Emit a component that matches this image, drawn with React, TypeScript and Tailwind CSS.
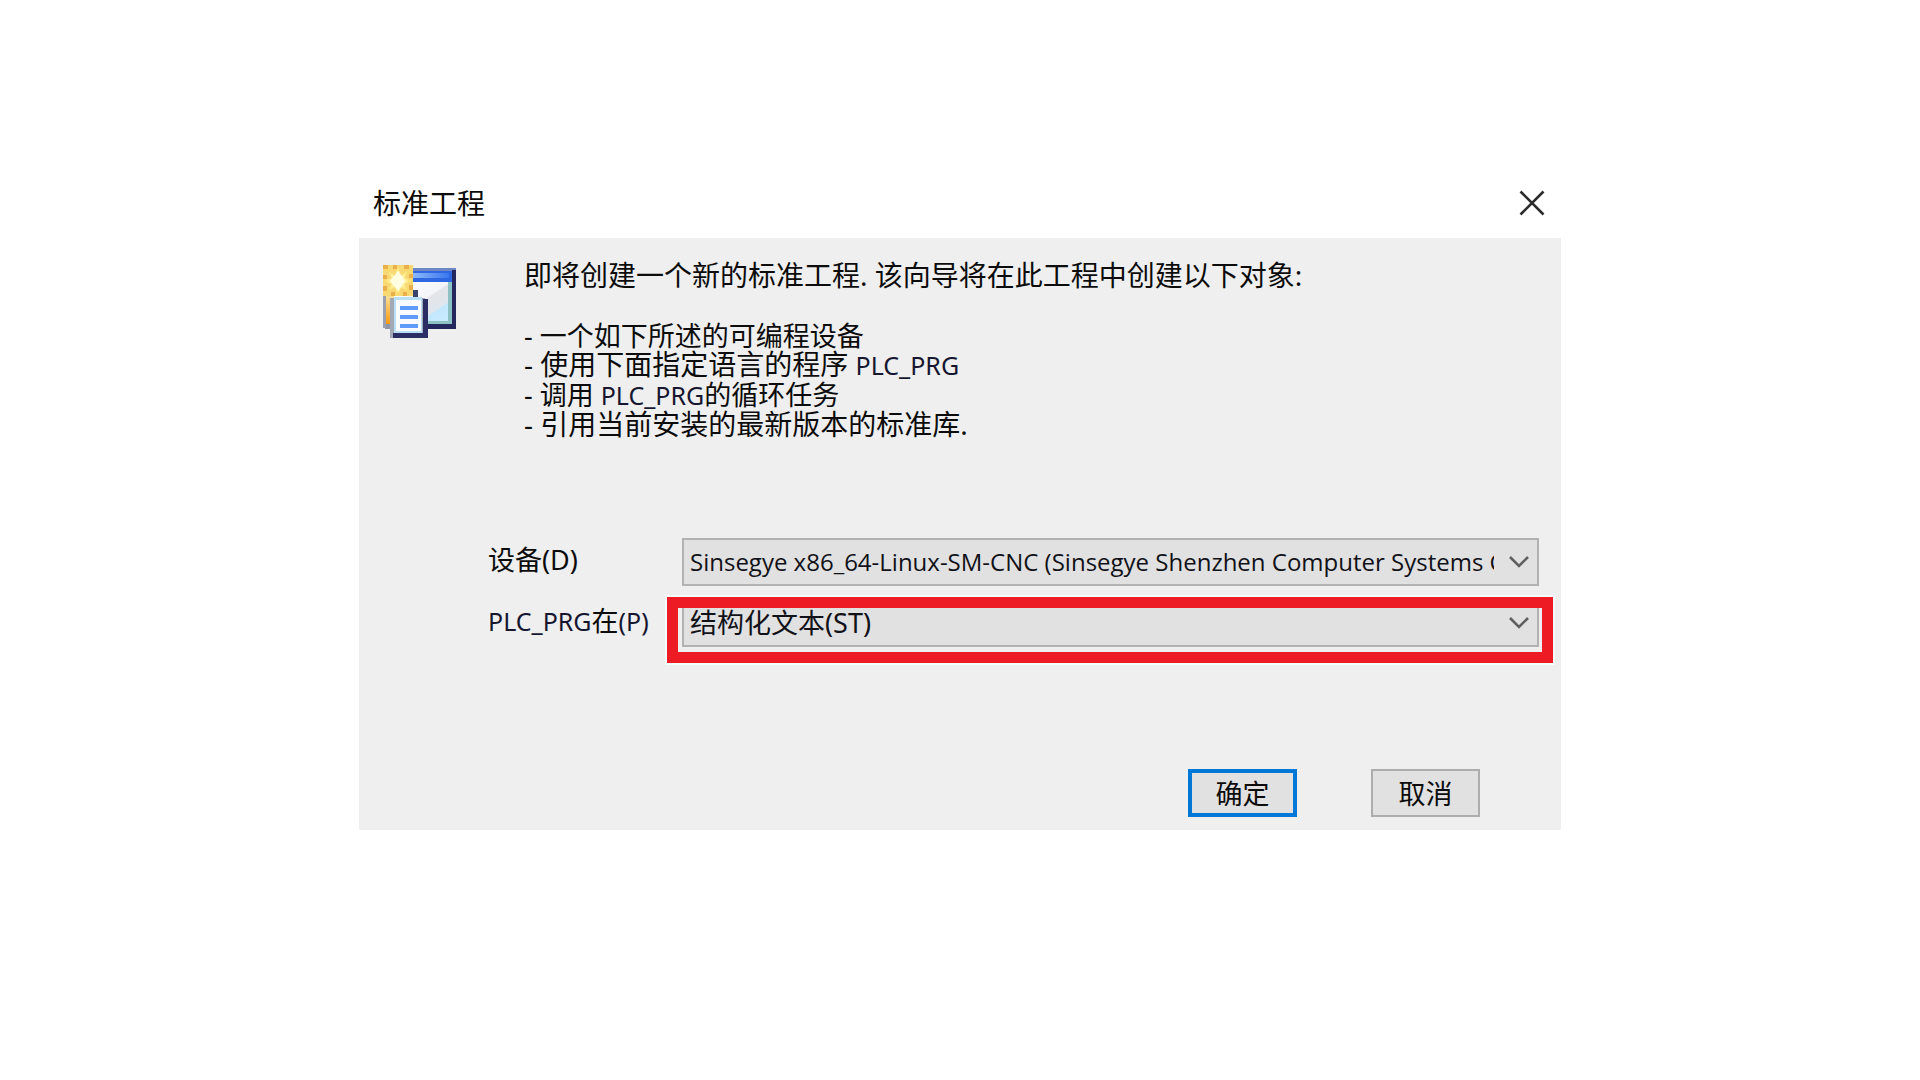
import type { ReactNode } from "react";

function Latin({ children }: { children: ReactNode }) {
  return <span className="text-[25px] text-[#161630]">{children}</span>;
}

function WizardIcon() {
  return (
    <svg viewBox="0 0 73 73" className="size-[73px] shrink-0" aria-hidden="true">
      <defs>
        <linearGradient id="bar" x1="0" x2="1" y1="0" y2="0">
          <stop offset="0" stopColor="#8db8fb" />
          <stop offset="1" stopColor="#3c78ee" />
        </linearGradient>
        <linearGradient id="pane" x1="0" x2="1" y1="0" y2="1">
          <stop offset="0" stopColor="#ffffff" />
          <stop offset="0.5" stopColor="#f3f5f8" />
          <stop offset="0.52" stopColor="#e3e5e8" />
          <stop offset="0.72" stopColor="#dfe6ee" />
          <stop offset="0.74" stopColor="#c3e7fd" />
          <stop offset="1" stopColor="#c9ecff" />
        </linearGradient>
        <linearGradient id="side" x1="0" x2="0" y1="0" y2="1">
          <stop offset="0" stopColor="#fde9a5" />
          <stop offset="1" stopColor="#f79a10" />
        </linearGradient>
        <radialGradient id="glow">
          <stop offset="0" stopColor="#ffffff" />
          <stop offset="0.4" stopColor="#fff6a8" />
          <stop offset="1" stopColor="#fbd75a" />
        </radialGradient>
      </defs>
      <rect x="2" y="3" width="71" height="61" fill="#8f96a8" />
      <rect x="28" y="3" width="45" height="4" fill="#6f86c4" />
      <rect x="69" y="5" width="4" height="59" fill="#25285f" />
      <rect x="40" y="59" width="33" height="5" fill="#25285f" />
      <rect x="28" y="6" width="41" height="11" fill="#2f66e2" />
      <rect x="30" y="8" width="36" height="5" fill="url(#bar)" />
      <rect x="4" y="17" width="63" height="42" fill="url(#pane)" />
      <path d="M65 17h4v42H42v-3h23z" fill="#8ec3c5" />
      <rect x="0" y="27" width="3" height="36" fill="#9ba1ac" />
      <rect x="3" y="27" width="8" height="32" fill="url(#side)" />
      <rect x="0" y="0" width="30" height="31" fill="#f8d873" />
      <path d="M0 0h5v4H0zM10 0h4v4h-4zM21 0h5v4h-5zM0 10h4v4H0zM26 9h4v4h-4zM0 21h4v5H0zM26 20h4v5h-4zM8 27h4v4H8zM20 27h4v4h-4z" fill="#e9b04a" />
      <path d="M2 3l10 8 3-11 3 11 9-8-6 10 9 3-9 3 6 9-9-6-3 9-3-9-10 6 7-9-9-3 9-3z" fill="url(#glow)" />
      <path d="M12 10l3-4 3 4 4 6-4 6-3 4-3-4-5-6z" fill="#fffde2" />
      <path d="M30 25h5v7h-5z" fill="#39456a" />
      <path d="M7 33h35v40H7z" fill="#a3a9b4" />
      <path d="M40 34h5v39H10v-5h30z" fill="#2b2d65" />
      <rect x="11" y="32" width="28" height="36" fill="#b9dff5" />
      <rect x="13" y="35" width="25" height="31" fill="#f9fbff" />
      <path d="M17 41h18v4H17zM17 50h18v4H17zM17 59h18v4H17z" fill="#5e9bfa" />
    </svg>
  );
}

function ComboBox({ id, value }: { id: string; value: string }) {
  return (
    <div className="relative min-w-0">
      <select
        id={id}
        className="block h-12 w-full appearance-none rounded-none border-2 border-[#b2b2b2] bg-[#e1e1e1] pr-[43px] pl-[6px] text-[#111118] outline-none"
      >
        <option>{value}</option>
      </select>
      <svg
        viewBox="0 0 20 12"
        className="pointer-events-none absolute top-[18px] right-[10px] h-3 w-5"
        fill="none"
        stroke="#606060"
        strokeWidth="2.6"
        aria-hidden="true"
      >
        <path d="M1 1l9 9 9-9" />
      </svg>
    </div>
  );
}

export default function App() {
  return (
    <main className="min-h-screen bg-white pt-[168px] font-['Noto_Sans','Noto_Sans_CJK_SC',sans-serif] text-[27px] text-[#0c0c0c]">
      <section className="mx-auto w-full max-w-[1202px]" role="dialog" aria-labelledby="title">
        <header className="flex h-[70px] items-center justify-between pr-[15px] pl-[14px]">
          <h1 id="title" className="text-[28px]">标准工程</h1>
          <button type="button" aria-label="关闭" className="p-px">
            <svg viewBox="0 0 26 26" className="size-[26px]" stroke="#2b2b2b" strokeWidth="2.6" aria-hidden="true">
              <path d="M1.500 1.500l23 23M24.500 1.500l-23 23" />
            </svg>
          </button>
        </header>

        <form className="bg-[#efefef] pt-[22px] pb-[13px]" onSubmit={(e) => e.preventDefault()}>
          <div className="flex gap-[68px] pl-6">
            <div className="pt-[5px]">
              <WizardIcon />
            </div>
            <div className="text-[28px] leading-[30px] whitespace-nowrap">
              <p className="mb-[31px]">即将创建一个新的标准工程. 该向导将在此工程中创建以下对象:</p>
              <ul className="leading-[29px]">
                <li className="text-[27px]">- 一个如下所述的可编程设备</li>
                <li>
                  - 使用下面指定语言的程序 <Latin>PLC_PRG</Latin>
                </li>
                <li className="text-[27px]">
                  - 调用 <Latin>PLC_PRG</Latin>的循环任务
                </li>
                <li>- 引用当前安装的最新版本的标准库.</li>
              </ul>
            </div>
          </div>

          <div className="mt-[99px] grid grid-cols-[194px_1fr] gap-y-[13px] pr-[22px] pl-[129px] leading-[44px]">
            <label htmlFor="device">设备(D)</label>
            <div className="min-w-0 font-['Open_Sans','Noto_Sans_CJK_SC',sans-serif] text-[24px]">
              <ComboBox id="device" value="Sinsegye x86_64-Linux-SM-CNC (Sinsegye Shenzhen Computer Systems Co., Ltd.)" />
            </div>
            <label htmlFor="language" className="whitespace-nowrap">
              <Latin>PLC_PRG</Latin>在<Latin>(P)</Latin>
            </label>
            <div className="relative min-w-0">
              <ComboBox id="language" value="结构化文本(ST)" />
              <div className="pointer-events-none absolute -top-[2px] -right-[14px] -bottom-[16px] -left-[15px] border-[11px] border-[#ed1c24] outline-2 outline-[#f4fcfc]" />
            </div>
          </div>

          <div className="mt-[122px] flex justify-end gap-[74px] pr-[81px]">
            <button type="submit" className="h-12 w-[109px] border-4 border-[#0078d7] bg-[#e1e1e1] leading-none">
              确定
            </button>
            <button type="button" className="h-12 w-[109px] border-2 border-[#adadad] bg-[#e1e1e1] leading-none">
              取消
            </button>
          </div>
        </form>
      </section>
    </main>
  );
}
